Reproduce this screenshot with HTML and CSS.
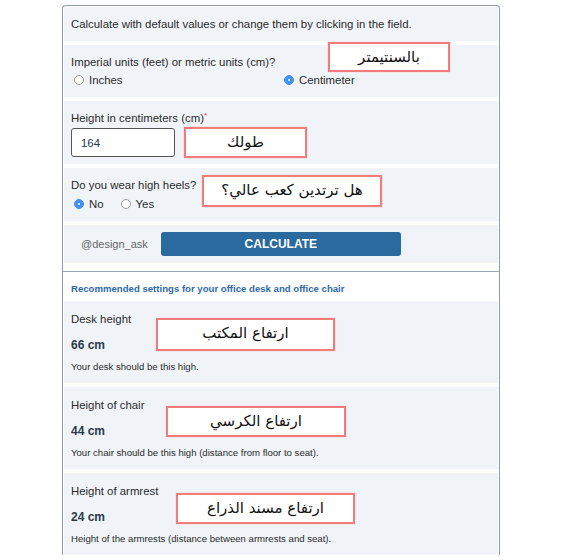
FILE: index.html
```html
<!DOCTYPE html>
<html lang="en">
<head>
  <meta charset="UTF-8">
  <meta name="viewport" content="width=device-width, initial-scale=1.0">
  <title>Office desk calculator</title>
  <link rel="stylesheet" href="styles.css">
</head>
<body>
  <div class="calc">
    <div class="block">Calculate with default values or change them by clicking in the field.</div>

    <div class="block">
      <div class="label">Imperial units (feet) or metric units (cm)?</div>
      <div class="units">
        <label class="opt"><input type="radio" name="unit"> Inches</label>
        <label class="opt"><input type="radio" name="unit" checked> Centimeter</label>
      </div>
      <span class="note note-unit">بالسنتيمتر</span>
    </div>

    <div class="block block-height">
      <div class="label">Height in centimeters (cm)<span class="req">*</span></div>
      <input type="text" class="field" value="164">
      <span class="note note-height">طولك</span>
    </div>

    <div class="block">
      <div class="label">Do you wear high heels?</div>
      <div class="heels">
        <label class="opt"><input type="radio" name="heels" checked> No</label>
        <label class="opt"><input type="radio" name="heels"> Yes</label>
      </div>
      <span class="note note-heels">هل ترتدين كعب عالي؟</span>
    </div>

    <div class="block block-action">
      <span class="handle">@design_ask</span>
      <button class="btn">CALCULATE</button>
    </div>

    <div class="results">
      <div class="results-title">Recommended settings for your office desk and office chair</div>

      <div class="block result">
        <div class="label">Desk height</div>
        <div class="value">66 cm</div>
        <div class="desc">Your desk should be this high.</div>
        <span class="note note-desk">ارتفاع المكتب</span>
      </div>

      <div class="block result">
        <div class="label">Height of chair</div>
        <div class="value">44 cm</div>
        <div class="desc">Your chair should be this high (distance from floor to seat).</div>
        <span class="note note-chair">ارتفاع الكرسي</span>
      </div>

      <div class="block result">
        <div class="label">Height of armrest</div>
        <div class="value">24 cm</div>
        <div class="desc">Height of the armrests (distance between armrests and seat).</div>
        <span class="note note-arm">ارتفاع مسند الذراع</span>
      </div>
    </div>
  </div>
</body>
</html>
```

FILE: styles.css
```css
body { margin: 0; background: #fff; font-family: "Liberation Sans", Arial, sans-serif; font-size: 11.4px; color: #2b2b2b; }
.calc { width: 434px; margin: 5px 0 0 62px; border: 1px solid #8d9cab; border-bottom: none; border-radius: 4px 4px 0 0; padding: 1px 1px 0; }
.block { position: relative; background: #f0f4f8; padding: 10px 7px; line-height: 14px; margin-bottom: 4px; }
.label { line-height: 14px; }
.req { color: #e0303a; font-size: 8px; vertical-align: top; line-height: 10px; }
.units { display: grid; grid-template-columns: 1fr 1fr; margin-top: 4px; }
.heels { display: flex; gap: 14px; margin-top: 5px; }
.opt { display: flex; align-items: center; gap: 5px; padding-left: 3px; }
.opt input { appearance: none; -webkit-appearance: none; width: 10px; height: 10px; margin: 0; border: 1px solid #9a9a9a; border-radius: 50%; background: #fff; }
.opt input:checked { border-color: #3a86e8; background: #fff; box-shadow: inset 0 0 0 3px #3f8ff0; }
.block-height { padding-bottom: 7px; }
.field { display: block; box-sizing: border-box; width: 104px; height: 29px; margin-top: 3px; padding: 0 9px; border: 1px solid #555; border-radius: 3px; font: 11.4px "Liberation Sans", Arial, sans-serif; color: #22384e; background: #fff; }
.block-action { display: flex; align-items: center; padding: 7px 7px 7px 17px; }
.handle { color: #666; font-size: 11px; margin-right: 13px; }
.btn { width: 240px; height: 24px; border: none; border-radius: 3px; background: #2a6a9f; color: #fff; font: bold 12px "Liberation Sans", Arial, sans-serif; }
.results { border-top: 1px solid #9aa6b2; margin: 8px -1px 0; padding: 0 1px; }
.results-title { color: #2e6aa8; font-weight: bold; font-size: 9.6px; padding: 14px 7px 9px; line-height: 6px; }
.result { padding: 11px 7px 10px; }
.value { font-weight: bold; font-size: 12px; color: #2c3a4a; margin-top: 12px; }
.desc { font-size: 9.6px; line-height: 12px; margin-top: 9px; }
.note { position: absolute; box-sizing: border-box; background: #fff; border: 2px solid #f27b7b; box-shadow: 0 0 1px #f5a0a0; font-family: "DejaVu Sans", serif; font-size: 15px; color: #111; text-align: center; direction: rtl; line-height: 26px; }
.note-unit { left: 264px; top: -3px; width: 122px; height: 30px; }
.note-height { left: 120px; top: 26px; width: 123px; height: 31px; }
.note-heels { left: 138px; top: 7px; width: 180px; height: 32px; }
.note-desk { left: 92px; top: 17px; width: 179px; height: 33px; }
.note-chair { left: 102px; top: 19px; width: 180px; height: 31px; }
.note-arm { left: 112px; top: 20px; width: 179px; height: 31px; }
```
